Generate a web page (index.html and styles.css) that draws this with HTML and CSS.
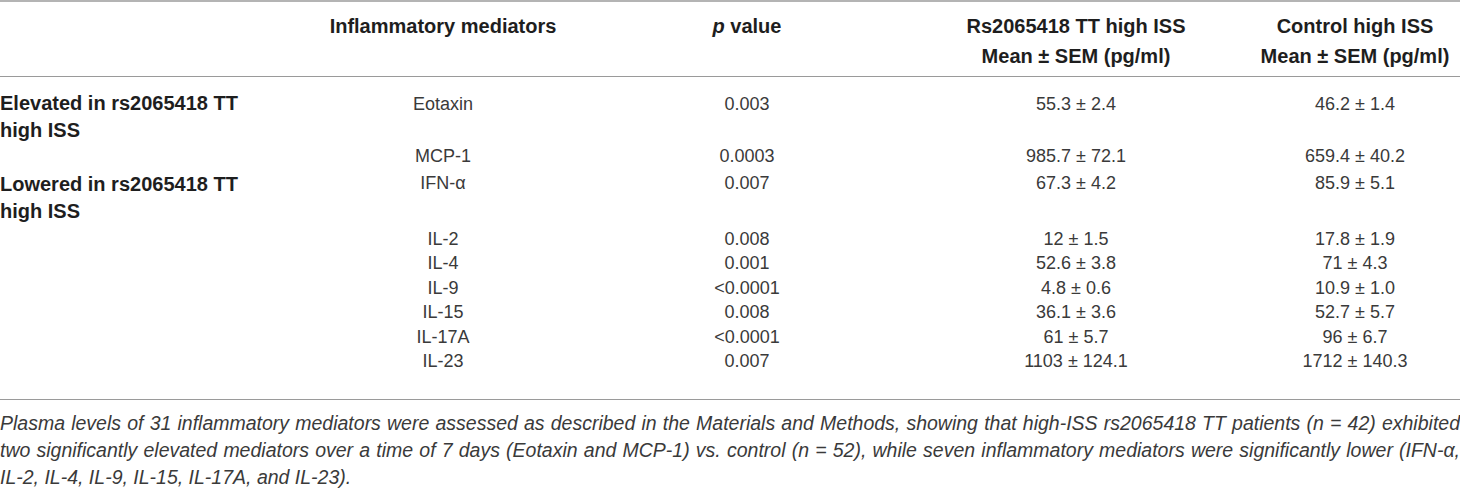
FILE: index.html
```html
<!DOCTYPE html>
<html lang="en">
<head>
  <meta charset="UTF-8" />
  <title>Inflammatory mediators</title>
  <link rel="stylesheet" href="styles.css">
</head>
<body>

  <table class="data">
    <colgroup>
      <col class="c-group">
      <col class="c-name">
      <col class="c-p">
      <col class="c-tt">
      <col class="c-ctrl">
    </colgroup>
    <thead>
      <tr>
        <th></th>
        <th>Inflammatory mediators</th>
        <th><i>p</i> value</th>
        <th>Rs2065418 TT high ISS<br>Mean ± SEM (pg/ml)</th>
        <th>Control high ISS<br>Mean ± SEM (pg/ml)</th>
      </tr>
    </thead>
    <tbody>
      <tr class="first">
        <td class="group">Elevated in rs2065418 TT high ISS</td>
        <td>Eotaxin</td>
        <td>0.003</td>
        <td>55.3 ± 2.4</td>
        <td>46.2 ± 1.4</td>
      </tr>
      <tr class="group-end">
        <td class="group"></td>
        <td>MCP-1</td>
        <td>0.0003</td>
        <td>985.7 ± 72.1</td>
        <td>659.4 ± 40.2</td>
      </tr>
      <tr class="group-end">
        <td class="group">Lowered in rs2065418 TT high ISS</td>
        <td>IFN-α</td>
        <td>0.007</td>
        <td>67.3 ± 4.2</td>
        <td>85.9 ± 5.1</td>
      </tr>
      <tr>
        <td class="group"></td>
        <td>IL-2</td>
        <td>0.008</td>
        <td>12 ± 1.5</td>
        <td>17.8 ± 1.9</td>
      </tr>
      <tr>
        <td class="group"></td>
        <td>IL-4</td>
        <td>0.001</td>
        <td>52.6 ± 3.8</td>
        <td>71 ± 4.3</td>
      </tr>
      <tr>
        <td class="group"></td>
        <td>IL-9</td>
        <td>&lt;0.0001</td>
        <td>4.8 ± 0.6</td>
        <td>10.9 ± 1.0</td>
      </tr>
      <tr>
        <td class="group"></td>
        <td>IL-15</td>
        <td>0.008</td>
        <td>36.1 ± 3.6</td>
        <td>52.7 ± 5.7</td>
      </tr>
      <tr>
        <td class="group"></td>
        <td>IL-17A</td>
        <td>&lt;0.0001</td>
        <td>61 ± 5.7</td>
        <td>96 ± 6.7</td>
      </tr>
      <tr class="last">
        <td class="group"></td>
        <td>IL-23</td>
        <td>0.007</td>
        <td>1103 ± 124.1</td>
        <td>1712 ± 140.3</td>
      </tr>
    </tbody>
  </table>

  <p class="caption">Plasma levels of 31 inflammatory mediators were assessed as described in the Materials and Methods, showing that high-ISS rs2065418 TT patients (n = 42) exhibited two significantly elevated mediators over a time of 7 days (Eotaxin and MCP-1) vs. control (n = 52), while seven inflammatory mediators were significantly lower (IFN-α, IL-2, IL-4, IL-9, IL-15, IL-17A, and IL-23).</p>

</body>
</html>
```

FILE: styles.css
```css
body {
  margin: 0;
  background-color: #fff;
  font-family: "Liberation Sans", Arial, sans-serif;
  color: #3a3a3a;
}
.data {
  width: 1460px;
  table-layout: fixed;
  border-collapse: collapse;
  border-top: 2px solid #b4b4b4;
  border-bottom: 1px solid #9a9a9a;
}
.c-group { width: 294px; }
.c-name { width: 298px; }
.c-p { width: 310px; }
.c-tt { width: 348px; }
.c-ctrl { width: 210px; }

.data th {
  font-size: 20px;
  font-weight: bold;
  color: #1e1e1e;
  line-height: 30px;
  text-align: center;
  vertical-align: top;
  padding: 9px 0 5px;
  border-bottom: 1px solid #9a9a9a;
}
.data td {
  font-size: 18px;
  line-height: 24.5px;
  text-align: center;
  vertical-align: top;
  padding: 0;
}
.data td.group {
  font-size: 20px;
  font-weight: bold;
  color: #1e1e1e;
  line-height: 27px;
  text-align: left;
  padding-right: 20px;
}
.data tr.first td {
  padding-top: 15px;
}
.data tr.group-end td {
  padding-bottom: 2px;
}
.data tr.first td.group {
  padding-top: 13px;
}
.data tr.last td {
  padding-bottom: 25px;
}
.caption {
  margin: 10px 0 0;
  font-size: 19.5px;
  font-style: italic;
  line-height: 27px;
  text-align: justify;
  color: #3a3a3a;
}
```
